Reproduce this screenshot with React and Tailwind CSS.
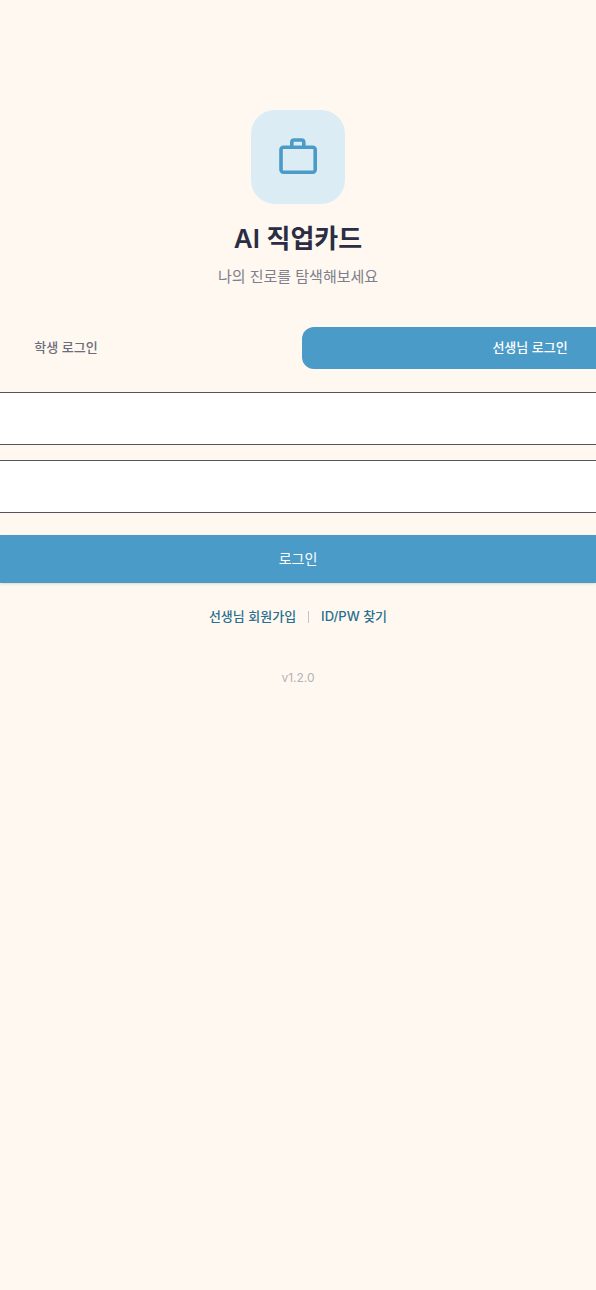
import { useState } from "react";

const field = "block w-full h-[53px] px-4 bg-white border-y border-[#55555a] text-base text-[#2b2d42] outline-none";
const tab = "flex-1 h-[42px] rounded-xl text-[13px] font-medium";
const link = "text-[13px] font-medium text-[#2a6f8f] hover:underline";

const TABS = [
  { id: "student", label: "학생 로그인" },
  { id: "teacher", label: "선생님 로그인" },
];

export default function App() {
  const [role, setRole] = useState("teacher");
  const [form, setForm] = useState({ id: "", password: "" });

  return (
    <main className="min-h-screen overflow-x-hidden bg-[#fff8f0] pt-[110px] font-['Inter','Noto_Sans_CJK_KR',sans-serif]">
      <header className="flex flex-col items-center">
        <div className="flex size-[94px] items-center justify-center rounded-3xl bg-[#dcecf5]">
          <BriefcaseIcon />
        </div>
        <h1 className="mt-[17px] text-[26px] leading-9 font-semibold text-[#2b2d42]">AI 직업카드</h1>
        <p className="mt-2 text-[15px] leading-6 text-[#7d7f8b]">나의 진로를 탐색해보세요</p>
      </header>

      {/* the tab row is wider than a phone and runs off both sides */}
      <div className="mt-[38px] flex justify-center">
        <div role="tablist" className="flex w-[920px] shrink-0 gap-2">
          {TABS.map((t) => (
            <button
              key={t.id}
              type="button"
              role="tab"
              aria-selected={role === t.id}
              onClick={() => setRole(t.id)}
              className={`${tab} ${role === t.id ? "bg-[#4a9bc7] text-white" : "text-[#6b6d7b]"}`}
            >
              {t.label}
            </button>
          ))}
        </div>
      </div>

      <form className="mt-[23px]" onSubmit={(e) => e.preventDefault()}>
        <div className="flex flex-col gap-[15px]">
          <input type="text" aria-label="아이디" className={field} value={form.id}
            onChange={(e) => setForm({ ...form, id: e.target.value })} />
          <input type="password" aria-label="비밀번호" className={field} value={form.password}
            onChange={(e) => setForm({ ...form, password: e.target.value })} />
        </div>
        <button type="submit" className="mt-[22px] block h-12 w-full bg-[#4a9bc7] text-sm text-white shadow-sm">
          로그인
        </button>
      </form>

      <nav className="mt-6 flex items-center justify-center gap-3">
        <a href="#signup" className={link}>선생님 회원가입</a>
        <span className="h-3 w-px bg-[#c4c2c4]" />
        <a href="#find" className={link}>ID/PW 찾기</a>
      </nav>

      <p className="mt-[43px] text-center text-xs text-[#b3b1b5]">v1.2.0</p>
    </main>
  );
}

function BriefcaseIcon() {
  return (
    <svg className="size-[38px]" viewBox="0 0 38 38" fill="none" stroke="#4a9bc7" strokeWidth="3.6" strokeLinejoin="round" aria-hidden="true">
      <rect x="2" y="9.2" width="34.2" height="25" rx="2.4" />
      <path d="M12.8 9.2V4.4Q12.8 2 15.2 2H22.4Q24.8 2 24.8 4.4V9.2" />
    </svg>
  );
}
